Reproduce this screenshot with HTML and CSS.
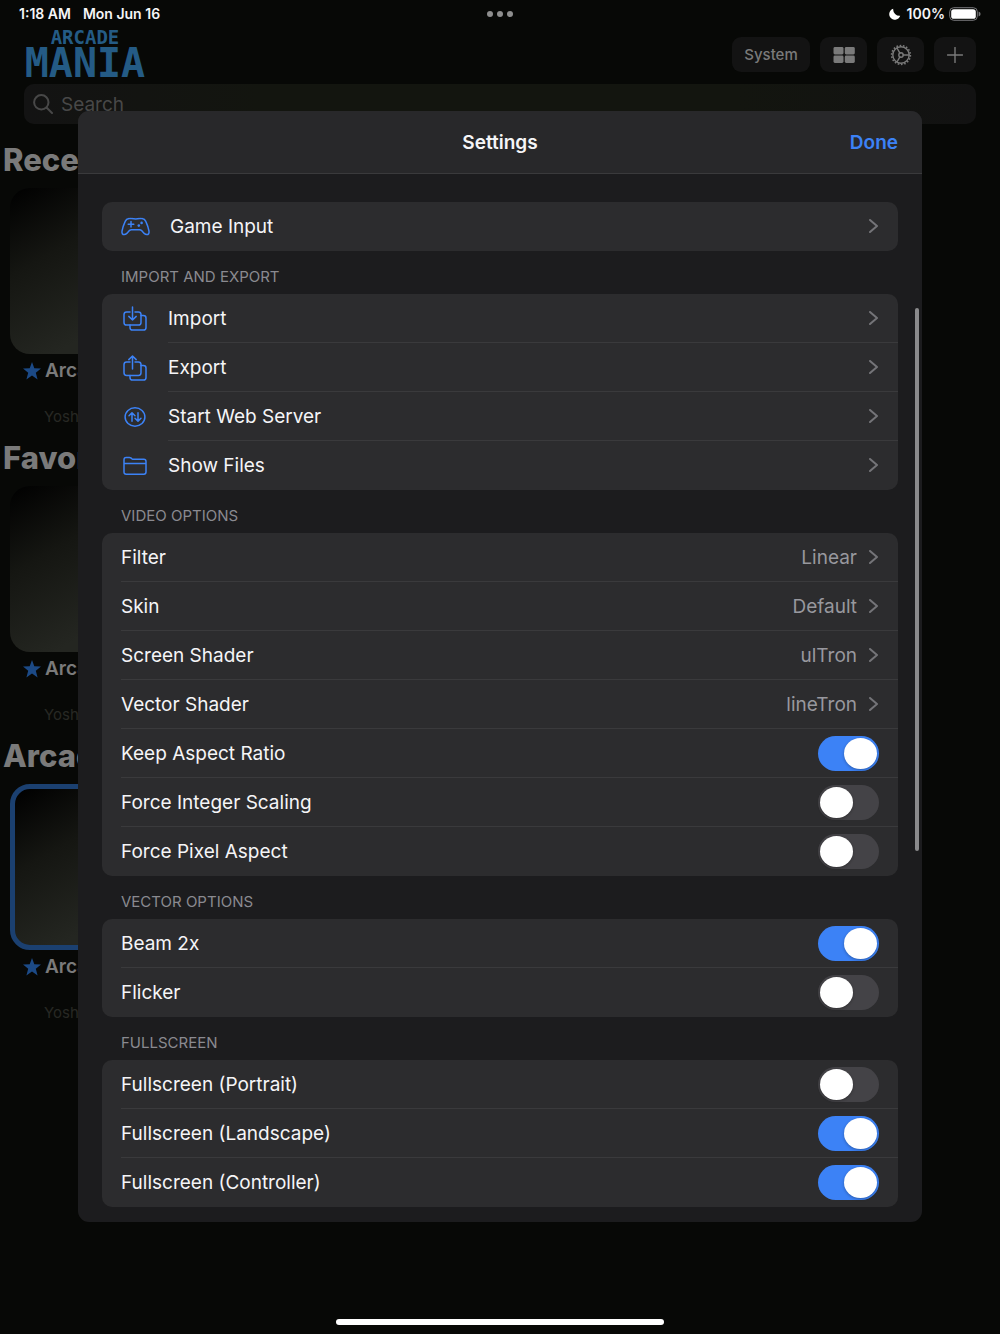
FILE: index.html
```html
<!DOCTYPE html>
<html lang="en">
<head>
  <meta charset="UTF-8" />
  <meta name="viewport" content="width=device-width, initial-scale=1" />
  <title>Arcade Mania - Settings</title>
  <link rel="stylesheet" href="styles.css">
</head>
<body>

<svg class="defs" width="0" height="0" aria-hidden="true">
  <symbol id="chevron" viewBox="0 0 9 14">
    <path d="M1 1 L8 7 L1 13" />
  </symbol>
  <symbol id="star" viewBox="0 0 18 18">
    <path d="M9 0 L11.3 6.2 L18 6.5 L12.8 10.8 L14.6 17.4 L9 13.6 L3.4 17.4 L5.2 10.8 L0 6.5 L6.7 6.2 Z" />
  </symbol>
</svg>

<div class="status-bar">
  <div class="status-left"><span>1:18 AM</span><span>Mon Jun 16</span></div>
  <div class="dots"><i></i><i></i><i></i></div>
  <div class="status-right">
    <svg class="moon" width="12" height="12" viewBox="0 0 12 12"><path d="M4.2 0.8 A5.6 5.6 0 1 0 11.2 7.8 A6.5 6.5 0 0 1 4.2 0.8 Z" /></svg>
    <span>100%</span>
    <svg class="battery" width="32" height="14" viewBox="0 0 32 14">
      <rect class="shell" x="0.7" y="0.7" width="27.6" height="12.6" rx="4" />
      <rect x="2.2" y="2.2" width="24.6" height="9.6" rx="2.6" />
      <path class="tip" d="M29.6 4.6 Q31.6 5.4 31.6 7 Q31.6 8.6 29.6 9.4 Z" />
    </svg>
  </div>
</div>

<div class="app">
  <header class="toolbar">
    <div class="logo"><span class="logo-top">ARCADE</span><span class="logo-bottom">MANIA</span></div>
    <div class="tools">
      <button class="tool tool-text">System</button>
      <button class="tool" aria-label="Layout">
        <svg width="22" height="18" viewBox="0 0 22 18"><rect x="0.5" y="1" width="10" height="7.4" rx="1.4" /><rect x="11.8" y="1" width="10" height="7.4" rx="1.4" /><rect x="0.5" y="9.6" width="10" height="7.4" rx="1.4" /><rect x="11.8" y="9.6" width="10" height="7.4" rx="1.4" /></svg>
      </button>
      <button class="tool" aria-label="Settings">
        <svg class="line" width="22" height="22" viewBox="0 0 22 22"><circle cx="11" cy="11" r="8.2" /><circle class="teeth" cx="11" cy="11" r="9.4" /><circle cx="11" cy="11" r="2.2" /><path d="M13.2 11 H19 M9.9 9.1 L7 4 M9.9 12.9 L7 18" /></svg>
      </button>
      <button class="tool tool-add" aria-label="Add">
        <svg class="line" width="16" height="16" viewBox="0 0 16 16"><path d="M8 0.5 V15.5 M0.5 8 H15.5" /></svg>
      </button>
    </div>
  </header>

  <label class="search">
    <svg class="line" width="20" height="20" viewBox="0 0 20 20"><circle cx="8.3" cy="8.3" r="7.2" /><path d="M13.5 13.5 L19 19" /></svg>
    <input type="text" placeholder="Search" aria-label="Search">
  </label>

  <section class="shelf">
    <h2>Recent</h2>
    <div class="card"></div>
    <div class="game"><svg width="18" height="18"><use href="#star" /></svg>Arcade</div>
    <div class="maker">Yoshi</div>
  </section>
  <section class="shelf">
    <h2>Favorites</h2>
    <div class="card"></div>
    <div class="game"><svg width="18" height="18"><use href="#star" /></svg>Arcade</div>
    <div class="maker">Yoshi</div>
  </section>
  <section class="shelf">
    <h2>Arcade</h2>
    <div class="card selected"></div>
    <div class="game"><svg width="18" height="18"><use href="#star" /></svg>Arcade</div>
    <div class="maker">Yoshi</div>
  </section>
</div>

<main class="sheet" role="dialog" aria-labelledby="sheet-title">
  <div class="sheet-header">
    <h1 id="sheet-title">Settings</h1>
    <button class="done">Done</button>
  </div>

  <div class="sheet-body">
    <div class="group">
      <a class="row row-wide" href="#input">
        <span class="icon">
          <svg width="30" height="20" viewBox="0 0 30 20"><path d="M8 1.6 Q9.2 1.2 10.4 1.6 Q15 2.2 18.6 1.6 Q19.8 1.2 21 1.6 Q23.8 2 24.8 4.4 Q27.2 9.6 28 14.2 Q28.4 17.6 25.8 17.6 Q24.4 17.6 23.2 16.4 L20.6 13.6 Q19.8 12.8 18.6 12.8 H10.4 Q9.2 12.8 8.4 13.6 L5.8 16.4 Q4.6 17.6 3.2 17.6 Q0.6 17.6 1 14.2 Q1.8 9.6 4.2 4.4 Q5.2 2 8 1.6 Z" /><path d="M10 4.6 V10 M7.2 7.3 H12.8" /><circle class="dot" cx="20.6" cy="5.9" r="1.3" /><circle class="dot" cx="17.8" cy="8.6" r="1.3" /></svg>
        </span>
        <span class="row-body">Game Input<svg class="chevron" width="9" height="14"><use href="#chevron" /></svg></span>
      </a>
    </div>

    <h3>IMPORT AND EXPORT</h3>
    <div class="group">
      <a class="row" href="#import">
        <span class="icon">
          <svg width="24" height="26" viewBox="0 0 24 26"><path d="M7 6 H3.6 Q1 6 1 8.6 V16.4 Q1 19 3.6 19 H15.4 Q18 19 18 16.4 V8.6 Q18 6 15.4 6 H12" /><path d="M9.5 1 V14 M5.8 10.4 L9.5 14 L13.2 10.4" /><path d="M18 9.5 H20.4 Q23 9.5 23 12 V21.4 Q23 24 20.4 24 H9.6 Q7 24 7 21.4 V19" /></svg>
        </span>
        <span class="row-body">Import<svg class="chevron" width="9" height="14"><use href="#chevron" /></svg></span>
      </a>
      <a class="row" href="#export">
        <span class="icon">
          <svg width="24" height="26" viewBox="0 0 24 26"><path d="M7 7 H3.6 Q1 7 1 9.6 V17.8 Q1 20.4 3.6 20.4 H15.4 Q18 20.4 18 17.8 V9.6 Q18 7 15.4 7 H12" /><path d="M9.5 14 V1 M5.8 4.6 L9.5 1 L13.2 4.6" /><path d="M18 10.5 H20.4 Q23 10.5 23 13 V22.4 Q23 25 20.4 25 H9.6 Q7 25 7 22.4 V20.4" /></svg>
        </span>
        <span class="row-body">Export<svg class="chevron" width="9" height="14"><use href="#chevron" /></svg></span>
      </a>
      <a class="row" href="#server">
        <span class="icon">
          <svg width="22" height="20" viewBox="0 0 22 20"><ellipse cx="11" cy="10" rx="9.9" ry="9.2" /><path d="M8 14.2 V6 M5 8.8 L8 5.8 L11 8.8 M14 5.8 V14 M11 11.2 L14 14.2 L17 11.2" /></svg>
        </span>
        <span class="row-body">Start Web Server<svg class="chevron" width="9" height="14"><use href="#chevron" /></svg></span>
      </a>
      <a class="row" href="#files">
        <span class="icon">
          <svg width="24" height="20" viewBox="0 0 24 20"><path d="M1 16 V3.8 Q1 1.6 3.2 1.6 H6.4 Q7.4 1.6 8.2 2.2 L9 2.8 Q9.6 3.2 10.6 3.2 H20.8 Q23 3.2 23 5.4 V16 Q23 18.2 20.8 18.2 H3.2 Q1 18.2 1 16 Z M1 7.4 H23" /></svg>
        </span>
        <span class="row-body">Show Files<svg class="chevron" width="9" height="14"><use href="#chevron" /></svg></span>
      </a>
    </div>

    <h3>VIDEO OPTIONS</h3>
    <div class="group">
      <a class="row" href="#filter"><span class="row-body">Filter<span class="value">Linear</span><svg class="chevron" width="9" height="14"><use href="#chevron" /></svg></span></a>
      <a class="row" href="#skin"><span class="row-body">Skin<span class="value">Default</span><svg class="chevron" width="9" height="14"><use href="#chevron" /></svg></span></a>
      <a class="row" href="#screen-shader"><span class="row-body">Screen Shader<span class="value">ulTron</span><svg class="chevron" width="9" height="14"><use href="#chevron" /></svg></span></a>
      <a class="row" href="#vector-shader"><span class="row-body">Vector Shader<span class="value">lineTron</span><svg class="chevron" width="9" height="14"><use href="#chevron" /></svg></span></a>
      <label class="row"><span class="row-body">Keep Aspect Ratio<input class="switch" type="checkbox" checked></span></label>
      <label class="row"><span class="row-body">Force Integer Scaling<input class="switch" type="checkbox"></span></label>
      <label class="row"><span class="row-body">Force Pixel Aspect<input class="switch" type="checkbox"></span></label>
    </div>

    <h3>VECTOR OPTIONS</h3>
    <div class="group">
      <label class="row"><span class="row-body">Beam 2x<input class="switch" type="checkbox" checked></span></label>
      <label class="row"><span class="row-body">Flicker<input class="switch" type="checkbox"></span></label>
    </div>

    <h3>FULLSCREEN</h3>
    <div class="group">
      <label class="row"><span class="row-body">Fullscreen (Portrait)<input class="switch" type="checkbox"></span></label>
      <label class="row"><span class="row-body">Fullscreen (Landscape)<input class="switch" type="checkbox" checked></span></label>
      <label class="row"><span class="row-body">Fullscreen (Controller)<input class="switch" type="checkbox" checked></span></label>
    </div>
  </div>
  <div class="scrollbar"></div>
</main>

<div class="home-bar"></div>

</body>
</html>
```
FILE: styles.css
```css
:root {
  --background: #070806;
  --sheet: #1c1c1e;
  --sheet-header: #28282a;
  --group: #2c2c2e;
  --line: #3a3a3c;
  --text: #f5f5f7;
  --muted: #98989e;
  --primary: #3c82f6;
  --dim: #7a7a7a;
}

* {
  box-sizing: border-box;
}

body {
  margin: 0;
  min-height: 100vh;
  position: relative;
  overflow-x: hidden;
  font-family: Inter, 'Liberation Sans', sans-serif;
  background-color: var(--background);
  color: var(--text);
}

h1, h2, h3 {
  margin: 0;
}

button {
  font-family: inherit;
  border: none;
  cursor: pointer;
}

.defs {
  position: absolute;
}

.line {
  fill: none;
  stroke: currentColor;
  stroke-width: 2;
  stroke-linecap: round;
}

/* status bar */
.status-bar {
  display: grid;
  grid-template-columns: 1fr auto 1fr;
  align-items: center;
  height: 27px;
  padding: 0 19px;
  font-size: 14px;
  font-weight: 600;
}

.status-left {
  display: flex;
  gap: 12px;
}

.dots {
  display: flex;
  gap: 4px;
}

.dots i {
  width: 6px;
  height: 6px;
  border-radius: 50%;
  background: #8e8e8e;
}

.status-right {
  display: flex;
  justify-content: flex-end;
  align-items: center;
  gap: 4px;
}

.status-right svg {
  fill: #fff;
}

.moon {
  margin-right: 2px;
}

.status-right .shell {
  fill: none;
  stroke: #77777a;
}

.status-right .tip {
  fill: #77777a;
}

/* dimmed library behind the sheet */
.toolbar {
  display: flex;
  justify-content: space-between;
  height: 57px;
  padding: 0 24px;
}

.logo {
  display: flex;
  flex-direction: column;
  align-items: center;
  width: 122px;
  font-family: 'DejaVu Sans Mono', monospace;
  font-weight: bold;
  color: #245b85;
}

.logo-top {
  font-size: 19px;
  line-height: 20px;
}

.logo-bottom {
  font-size: 40px;
  line-height: 32px;
}

.tools {
  display: flex;
  gap: 10px;
  padding-top: 10px;
}

.tool {
  display: flex;
  align-items: center;
  justify-content: center;
  width: 47px;
  height: 35px;
  padding: 0;
  border-radius: 9px;
  background: #131313;
  color: var(--dim);
  fill: var(--dim);
}

.tool .line {
  stroke-width: 1.4;
}

.tool .teeth {
  stroke-width: 1.6;
  stroke-linecap: butt;
  stroke-dasharray: 1.6 1.68;
}

.tool-text {
  width: 78px;
  font-size: 15px;
  font-weight: 500;
}

.tool-add {
  width: 42px;
}

.search {
  display: flex;
  align-items: center;
  gap: 8px;
  height: 40px;
  margin: 0 24px;
  padding: 0 9px;
  border-radius: 10px;
  background: linear-gradient(90deg, #131313, #13150f 25%, #13150f 75%, #121212);
  color: #484848;
}

.search input {
  flex: 1;
  padding: 0;
  border: none;
  outline: none;
  background: none;
  font: 19px Inter, sans-serif;
  color: inherit;
}

.search input::placeholder {
  color: inherit;
}

.shelf {
  height: 298px;
  padding: 16px 0 0 3px;
}

.shelf h2 {
  font-size: 31px;
  line-height: 40px;
  font-weight: 800;
  color: var(--dim);
}

.card {
  width: 224px;
  height: 166px;
  margin: 8px 0 0 7px;
  border-radius: 20px;
  background: linear-gradient(150deg, #000, #151612 30%, #242621 65%);
}

.card.selected {
  border: 5px solid #1b4070;
}

.game {
  display: flex;
  align-items: center;
  gap: 4px;
  padding: 5px 0 0 20px;
  font-size: 19px;
  line-height: 24px;
  font-weight: 600;
  color: var(--dim);
}

.game svg {
  fill: #1c4a86;
}

.maker {
  padding: 24px 0 0 41px;
  font-size: 15px;
  line-height: 20px;
  color: #272824;
}

/* settings sheet */
.sheet {
  position: absolute;
  top: 111px;
  left: 78px;
  right: 78px;
  border-radius: 11px;
  overflow: hidden;
  background: var(--sheet);
  font-size: 19px;
}

.sheet-header {
  display: grid;
  grid-template-columns: 1fr auto 1fr;
  align-items: center;
  height: 63px;
  padding: 0 24px;
  background: var(--sheet-header);
  border-bottom: 1px solid var(--line);
}

.sheet-header h1 {
  grid-column: 2;
  font-size: 19px;
  font-weight: 600;
}

.done {
  justify-self: end;
  padding: 0;
  background: none;
  font-size: 19px;
  font-weight: 600;
  color: var(--primary);
}

.sheet-body {
  padding: 28px 24px 15px;
}

.sheet-body h3 {
  padding: 8px 19px 0;
  height: 43px;
  font-size: 15px;
  line-height: 36px;
  font-weight: 400;
  color: #8a8a90;
}

.group {
  border-radius: 10px;
  overflow: hidden;
  background: var(--group);
}

.row {
  display: flex;
  height: 49px;
  padding-left: 19px;
  color: inherit;
  text-decoration: none;
  cursor: pointer;
}

.row-body {
  flex: 1;
  display: flex;
  align-items: center;
  padding-right: 19px;
  border-bottom: 1px solid var(--line);
}

.row:last-child .row-body {
  border-bottom-color: transparent;
}

.icon {
  display: flex;
  align-items: center;
  justify-content: center;
  width: 28px;
  margin-right: 19px;
}

.row-wide .icon {
  width: 30px;
}

.icon svg {
  fill: none;
  stroke: var(--primary);
  stroke-width: 1.5;
  stroke-linecap: round;
  stroke-linejoin: round;
}

.icon .dot {
  fill: var(--primary);
  stroke: none;
}

.value {
  margin-left: auto;
  color: var(--muted);
}

.chevron {
  margin: 0 1px 0 auto;
  fill: none;
  stroke: #747478;
  stroke-width: 2;
  stroke-linecap: round;
  stroke-linejoin: round;
}

.value + .chevron {
  margin-left: 12px;
}

.switch {
  appearance: none;
  display: flex;
  align-items: center;
  width: 61px;
  height: 35px;
  margin: 0 0 0 auto;
  padding: 0 2px;
  border-radius: 18px;
  background: #444347;
  cursor: pointer;
}

.switch::before {
  content: '';
  width: 33px;
  height: 31px;
  border-radius: 50%;
  background: #fff;
  box-shadow: 0 1px 3px rgba(0, 0, 0, 0.3);
}

.switch:checked {
  justify-content: flex-end;
  background: var(--primary);
}

.scrollbar {
  position: absolute;
  top: 197px;
  right: 3px;
  width: 4px;
  height: 543px;
  border-radius: 2px;
  background: #8a8a8c;
}

.home-bar {
  position: absolute;
  bottom: 9px;
  left: 50%;
  width: 328px;
  height: 6px;
  margin-left: -164px;
  border-radius: 3px;
  background: #fff;
}
```
